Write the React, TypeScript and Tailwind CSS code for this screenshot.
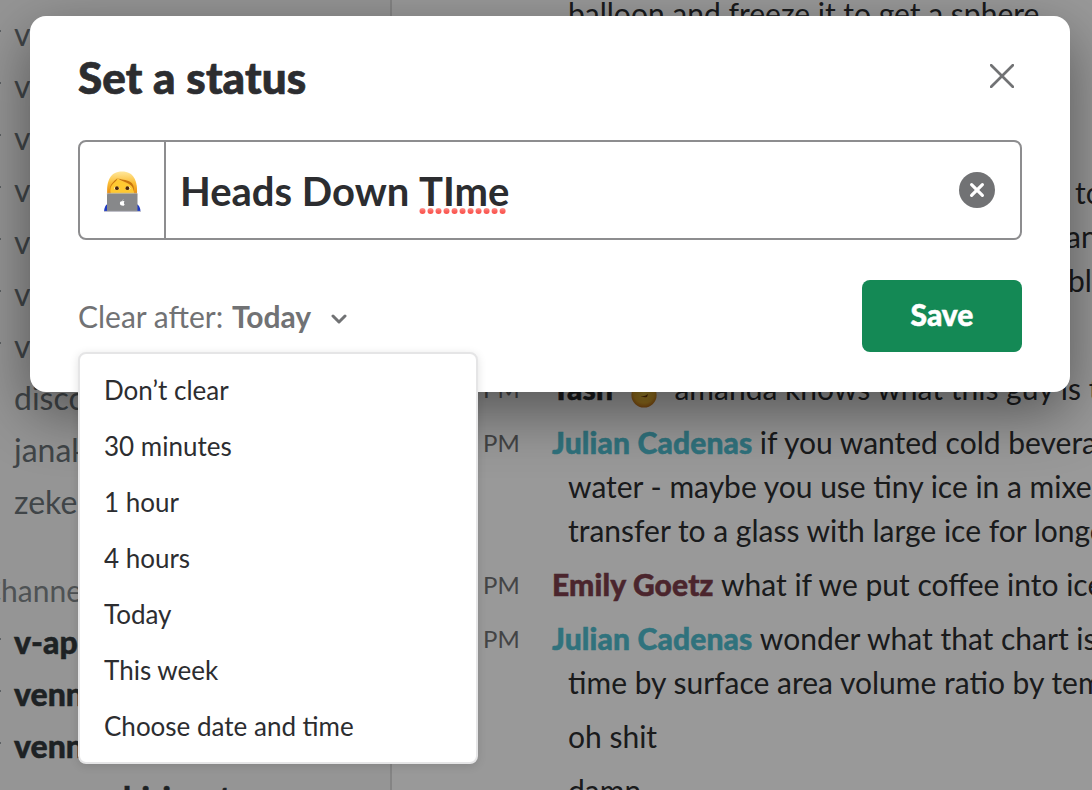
import React from "react";

type Channel = { name: string; strong?: boolean; mark?: boolean };

const directs: Channel[] = [
  { name: "v-design", mark: true },
  { name: "v-eng", mark: true },
  { name: "v-growth", mark: true },
  { name: "v-ideas", mark: true },
  { name: "v-launch", mark: true },
  { name: "v-ops", mark: true },
  { name: "v-random", mark: true },
  { name: "discover" },
  { name: "janak" },
  { name: "zeke" },
];

const channels: Channel[] = [
  { name: "v-app", strong: true, mark: true },
  { name: "venn", strong: true, mark: true },
  { name: "venn", strong: true, mark: true },
];

const options = ["Don’t clear", "30 minutes", "1 hour", "4 hours", "Today", "This week", "Choose date and time"];

function SidebarRow({ name, strong, mark }: Channel) {
  return (
    <div className="relative flex h-[52px] items-center pl-[14px]">
      {mark && <span className="absolute left-0 top-[22px] h-[2px] w-px bg-[#9da4a8]" />}
      <span className={strong ? "font-black text-[#33393d] [-webkit-text-stroke:0.5px_#33393d]" : "text-[#6b7378]"}>{name}</span>
    </div>
  );
}

function Sidebar() {
  return (
    <aside className="w-[392px] shrink-0 overflow-hidden border-r-2 border-[#dddddd] bg-[#f9f9f9] pt-[8px] text-[32px] leading-[52px]">
      {directs.map((c, i) => (
        <SidebarRow key={i} {...c} />
      ))}
      <div className="mt-[36px] flex h-[52px] items-center text-[30px] text-[#83898d]">
        <span className="-ml-[19px]">Channels</span>
      </div>
      {channels.map((c, i) => (
        <SidebarRow key={i} {...c} />
      ))}
      <div className="flex h-[52px] items-center pl-[14px] font-black text-[#33393d] [-webkit-text-stroke:0.5px_#33393d]">
        <span className="w-[109px]">venmo-</span>
        <span className="tracking-[0.3px]">hiring-t</span>
      </div>
    </aside>
  );
}

function Message({ author, tone, time, lines }: { author?: React.ReactNode; tone?: string; time?: boolean; lines: string[] }) {
  return (
    <div className="mb-[10px] flex whitespace-nowrap">
      <div className="h-[44px] w-[160px] shrink-0 pl-[91px] text-[24px] leading-[45px] text-[#717274]">{time ? "PM" : ""}</div>
      <div>
        {lines.map((line, i) => (
          <div key={i} className={author && i === 0 ? "h-[44px]" : "h-[44px] pl-[16px]"}>
            {i === 0 && author && (
              <span className={`font-black tracking-[0.15px] [-webkit-text-stroke:0.5px_currentColor] ${tone}`}>{author} </span>
            )}
            {line}
          </div>
        ))}
      </div>
    </div>
  );
}

function FaceEmoji() {
  return (
    <svg viewBox="0 0 30 30" className="ml-[16px] mr-[8px] inline-block h-[30px] w-[30px] align-[-10px]">
      <defs>
        <radialGradient id="face" cx="50%" cy="40%" r="60%">
          <stop offset="0" stopColor="#ffd84a" />
          <stop offset="0.7" stopColor="#f3b52f" />
          <stop offset="1" stopColor="#c9751a" />
        </radialGradient>
      </defs>
      <circle cx="15" cy="15" r="12.6" fill="url(#face)" />
      <path d="M10 15q4 3 9-1l-1 3q-4 1-8-2z" fill="#7a3e08" />
    </svg>
  );
}

function Messages() {
  return (
    <main className="-mt-[9px] min-w-0 flex-1 overflow-hidden bg-white text-[30px] leading-[44px] text-[#2c2d30]">
      <Message lines={["balloon and freeze it to get a sphere"]} />
      <div className="mb-[10px] h-[115px]" />
      <div className="mb-[64px] pl-[683px] whitespace-nowrap">
        <div>to</div>
        <div className="-ml-[9px]">and</div>
        <div className="-ml-[7px]">blend</div>
      </div>
      <Message
        time
        author={
          <>
            Tash
            <FaceEmoji />
          </>
        }
        tone="text-[#2c2d30]"
        lines={["amanda knows what this guy is talking"]}
      />
      <Message
        time
        author="Julian Cadenas"
        tone="text-[#50bfd0]"
        lines={["if you wanted cold beverage", "water - maybe you use tiny ice in a mixer", "transfer to a glass with large ice for longer"]}
      />
      <Message time author="Emily Goetz" tone="text-[#7d3f4b]" lines={["what if we put coffee into ice"]} />
      <Message time author="Julian Cadenas" tone="text-[#50bfd0]" lines={["wonder what that chart is", "time by surface area volume ratio by temp"]} />
      <Message lines={["oh shit"]} />
      <Message lines={["damn"]} />
    </main>
  );
}

function TechnologistEmoji() {
  return (
    <svg viewBox="0 0 40 42" className="h-[42px] w-[40px]">
      <defs>
        <linearGradient id="hair" x1="0" y1="0" x2="0" y2="1">
          <stop offset="0" stopColor="#ffe79c" />
          <stop offset="0.5" stopColor="#fbbf38" />
          <stop offset="1" stopColor="#e88a0c" />
        </linearGradient>
      </defs>
      <path d="M2 41.500c.2-3.600 1.500-6.500 3.500-7.500h29c2.500 1 4 3.900 4 7.500z" fill="#1d39c4" />
      <path d="M5.200 24C4.500 11 8 1.500 20 1.500S35.600 11 35 24z" fill="url(#hair)" />
      <path d="M8.800 24c-1-4 0-8 2.500-10.500 2.200-2 3.700-3 4.200-5C19 12 24.500 13 28.500 15c3.500 2 4.200 5.500 3.300 9z" fill="#ffc931" />
      <path d="M8 22c-.2-5 1.800-7.500 4.300-9.500 2-1.600 3-3 3.200-4.500-3 3-8.500 6-7.500 14zM15.500 8c4 3.600 10 4 13.300 7.300 1.700 1.700 2.600 3.700 2.900 6.700.9-5-.7-8.500-3.700-10.200C24 9.500 19 10 15.500 8z" fill="#c8750e" />
      <ellipse cx="14.600" cy="18.200" rx="2.500" ry="1.700" fill="#fff3d0" />
      <ellipse cx="25.800" cy="18.200" rx="2.500" ry="1.700" fill="#fff3d0" />
      <circle cx="14.900" cy="18.200" r="1.900" fill="#4a2408" />
      <circle cx="25.400" cy="18.200" r="1.900" fill="#4a2408" />
      <rect x="5" y="23.500" width="30.500" height="18" rx="1" fill="#87888a" />
      <path d="M5 24.200q0-.9 1-.9h28.500q1 0 1 .9" stroke="#b5b5b5" strokeWidth="0.800" fill="none" />
      <path d="M2 41.400h37" stroke="#c5c5cb" strokeWidth="1" />
      <path d="M20.300 31.300c1.200-.7 2-.1 2.200.4-.9.700-.8 1.900.1 2.500-.5 1.500-1.300 1.800-2.300 1.300-1.100.4-2.300-.6-2.400-2.200-.1-1.700 1.200-2.500 2.400-2zM20.300 31q0-1.300 1.200-1.700.1 1.300-1.200 1.700z" fill="#fff" />
    </svg>
  );
}

function SpellingDots() {
  return (
    <svg viewBox="0 0 90 8" className="absolute left-0 top-[40px] h-[8px] w-[90px]">
      <defs>
        <linearGradient id="dot" x1="0" y1="0" x2="0" y2="1">
          <stop offset="0" stopColor="#ff9a96" />
          <stop offset="0.45" stopColor="#fb6660" />
          <stop offset="1" stopColor="#fa4f49" />
        </linearGradient>
      </defs>
      {Array.from({ length: 11 }, (_, i) => (
        <circle key={i} cx={3.5 + i * 8.01} cy={4} r={3} fill="url(#dot)" />
      ))}
    </svg>
  );
}

function StatusDialog() {
  return (
    <section className="flex h-[376px] w-[1040px] flex-col rounded-[16px] bg-white px-[48px] text-[#2c2d30] shadow-[0_20px_60px_rgba(0,0,0,0.45)]">
      <header className="flex h-[124px] items-center justify-between pb-1">
        <h1 className="mt-[2px] text-[44px] font-black leading-[52px] tracking-[0.12px] [-webkit-text-stroke:0.7px_#2c2d30]">Set a status</h1>
        <svg viewBox="0 0 24 24" className="mr-[8px] h-[24px] w-[24px]">
          <path d="M1.200 1.200l21.600 21.600M22.800 1.200L1.200 22.800" stroke="#717274" strokeWidth="2.700" strokeLinecap="round" />
        </svg>
      </header>
      <div className="flex h-[100px] rounded-[8px] border-2 border-[#8d8d8f]">
        <div className="flex w-[86px] items-center justify-center border-r-2 border-[#8d8d8f] pt-[2px]">
          <TechnologistEmoji />
        </div>
        <div className="flex flex-1 items-center justify-between pl-[14px] pr-[25px]">
          <div className="mt-[2px] text-[40px] font-bold leading-[48px]">
            Heads Down{" "}
            <span className="relative inline-block">
              TIme
              <SpellingDots />
            </span>
          </div>
          <svg viewBox="0 0 36 36" className="h-[36px] w-[36px]">
            <circle cx="18" cy="18" r="18" fill="#717274" />
            <path d="M12.600 12.600l10.800 10.800M23.400 12.600L12.600 23.400" stroke="#fff" strokeWidth="3.200" strokeLinecap="round" />
          </svg>
        </div>
      </div>
      <footer className="mt-[40px] flex h-[72px] items-center justify-between">
        <div className="flex items-center text-[30px] leading-[44px] text-[#717274]">
          <span className="whitespace-pre">Clear after: </span>
          <span className="ml-px font-bold">Today</span>
          <svg viewBox="0 0 16 10" className="ml-[20px] mt-[6px] h-[10px] w-[16px]">
            <path d="M2 2l6 6 6-6" fill="none" stroke="#717274" strokeWidth="3" strokeLinecap="round" strokeLinejoin="round" />
          </svg>
        </div>
        <button className="h-[72px] w-[160px] rounded-[8px] bg-[#148955] pb-[4px] text-[30px] font-black text-white [-webkit-text-stroke:0.5px_#fff]">Save</button>
      </footer>
    </section>
  );
}

function ClearMenu() {
  return (
    <ul className="absolute left-[78px] top-[352px] h-[412px] w-[400px] rounded-[8px] border-2 border-[#e5e5e6] bg-white py-[8px] pl-[24px] text-[26px] text-[#2c2d30] shadow-[0_2px_10px_rgba(0,0,0,0.12)]">
      {options.map((o) => (
        <li key={o} className="flex h-[56px] items-center">
          {o}
        </li>
      ))}
    </ul>
  );
}

export default function App() {
  return (
    <div className="relative h-[790px] w-[1092px] overflow-hidden bg-white font-['Lato',sans-serif]">
      <div className="flex h-[790px]">
        <Sidebar />
        <Messages />
      </div>
      <div className="absolute inset-0 bg-black/40 pl-[30px] pt-[16px]">
        <StatusDialog />
        <ClearMenu />
      </div>
    </div>
  );
}
